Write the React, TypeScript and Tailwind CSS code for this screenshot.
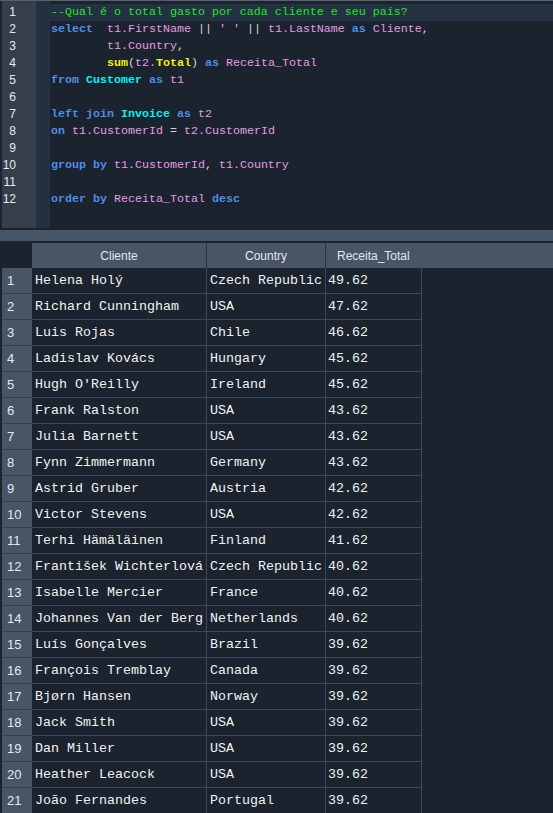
import React from 'react';

type Tok = [string, string];

const kw = 'text-[#4d8ee8] font-bold';
const id = 'text-[#e49be2]';
const tb = 'text-[#00f2f2] font-bold';
const fn = 'text-[#f2f200] font-bold';
const pu = 'text-[#d6d6d6]';
const cm = 'text-[#1ee81e]';

const code: Tok[][] = [
  [[cm, '--Qual é o total gasto por cada cliente e seu país?']],
  [[kw, 'select'], [pu, '  '], [id, 't1.FirstName'], [pu, ' || '], [id, "' '"], [pu, ' || '], [id, 't1.LastName'], [pu, ' '], [kw, 'as'], [pu, ' '], [id, 'Cliente'], [pu, ',']],
  [[pu, '        '], [id, 't1.Country'], [pu, ',']],
  [[pu, '        '], [fn, 'sum'], [pu, '('], [id, 't2.'], [fn, 'Total'], [pu, ') '], [kw, 'as'], [pu, ' '], [id, 'Receita_Total']],
  [[kw, 'from'], [pu, ' '], [tb, 'Customer'], [pu, ' '], [kw, 'as'], [pu, ' '], [id, 't1']],
  [],
  [[kw, 'left join'], [pu, ' '], [tb, 'Invoice'], [pu, ' '], [kw, 'as'], [pu, ' '], [id, 't2']],
  [[kw, 'on'], [pu, ' '], [id, 't1.CustomerId'], [pu, ' = '], [id, 't2.CustomerId']],
  [],
  [[kw, 'group by'], [pu, ' '], [id, 't1.CustomerId'], [pu, ', '], [id, 't1.Country']],
  [],
  [[kw, 'order by'], [pu, ' '], [id, 'Receita_Total'], [pu, ' '], [kw, 'desc']],
];

const rows: [string, string, string][] = [
  ['Helena Holý', 'Czech Republic', '49.62'],
  ['Richard Cunningham', 'USA', '47.62'],
  ['Luis Rojas', 'Chile', '46.62'],
  ['Ladislav Kovács', 'Hungary', '45.62'],
  ["Hugh O'Reilly", 'Ireland', '45.62'],
  ['Frank Ralston', 'USA', '43.62'],
  ['Julia Barnett', 'USA', '43.62'],
  ['Fynn Zimmermann', 'Germany', '43.62'],
  ['Astrid Gruber', 'Austria', '42.62'],
  ['Victor Stevens', 'USA', '42.62'],
  ['Terhi Hämäläinen', 'Finland', '41.62'],
  ['František Wichterlová', 'Czech Republic', '40.62'],
  ['Isabelle Mercier', 'France', '40.62'],
  ['Johannes Van der Berg', 'Netherlands', '40.62'],
  ['Luís Gonçalves', 'Brazil', '39.62'],
  ['François Tremblay', 'Canada', '39.62'],
  ['Bjørn Hansen', 'Norway', '39.62'],
  ['Jack Smith', 'USA', '39.62'],
  ['Dan Miller', 'USA', '39.62'],
  ['Heather Leacock', 'USA', '39.62'],
  ['João Fernandes', 'Portugal', '39.62'],
];

const mono = "font-['Liberation_Mono',monospace]";
const sans = "font-['Liberation_Sans',Arial,sans-serif]";

function Editor() {
  return (
    <div className="flex h-[228px] border-t border-[#58626e] pl-[2px]">
      <div className={`w-[34px] bg-[#363f49] pt-[3px] text-right pr-[20px] text-[12px] leading-[17px] text-[#e8eaec] ${sans}`}>
        {code.map((_, i) => (
          <div key={i} className="h-[17px]">{i + 1}</div>
        ))}
      </div>
      <div className="w-[14px] bg-[#243040]" />
      <div className={`flex-1 pt-[3px] text-[11.67px] leading-[17px] whitespace-pre ${mono}`}>
        {code.map((line, i) => (
          <div key={i} className={`h-[17px] pl-[1px] ${i === 0 ? 'bg-[#233142]' : ''}`}>
            {line.map(([c, t], j) => (
              <span key={j} className={c}>{t}</span>
            ))}
          </div>
        ))}
      </div>
    </div>
  );
}

function ResultGrid() {
  return (
    <div>
      <div className={`flex h-[25px] text-[12px] text-[#e3e6ea] ${sans}`}>
        <div className="w-[32px]" />
        <div className="w-[175px] bg-[#475566] border-r border-[#2a3441] flex items-center justify-center">Cliente</div>
        <div className="w-[119px] bg-[#475566] border-r border-[#2a3441] flex items-center justify-center">Country</div>
        <div className="w-[96px] bg-[#475566] flex items-center pl-[11px]">Receita_Total</div>
        <div className="flex-1 bg-[#475566]" />
      </div>
      {rows.map((r, i) => (
        <div key={i} className="flex h-[26px]">
          <div className="w-[2px]" />
          <div className={`w-[30px] bg-[#475565] border-b border-[#34404d] flex items-end pb-[3px] pl-[5px] text-[13px] text-[#e6e9ec] ${sans}`}>
            {i + 1}
          </div>
          <div className={`flex text-[13.33px] text-[#f2f2f2] ${mono}`}>
            <div className="w-[175px] border-r border-b border-[#3d4959] flex items-center pl-[3px] whitespace-nowrap overflow-hidden">{r[0]}</div>
            <div className="w-[119px] border-r border-b border-[#3d4959] flex items-center pl-[3px] whitespace-nowrap overflow-hidden">{r[1]}</div>
            <div className="w-[96px] border-r border-b border-[#3d4959] flex items-center pl-[2px]">{r[2]}</div>
          </div>
        </div>
      ))}
    </div>
  );
}

export default function App() {
  return (
    <div className="w-[553px] h-[813px] bg-[#1b232e] overflow-hidden">
      <Editor />
      <div className="h-[2px]" />
      <div className="h-[11px] bg-[#465565]" />
      <div className="h-[2px]" />
      <ResultGrid />
    </div>
  );
}
